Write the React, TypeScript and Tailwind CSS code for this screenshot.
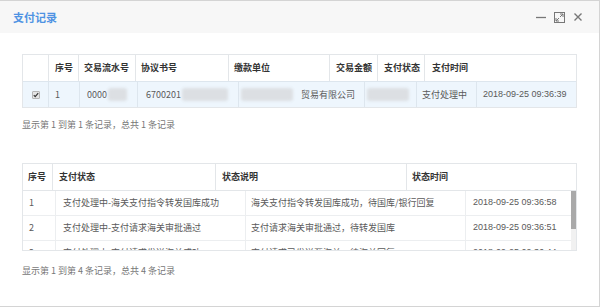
import { useState } from "react";

const font = "font-['Microsoft_YaHei','Noto_Sans_CJK_SC','Liberation_Sans',sans-serif]";

// blurred box standing in for masked values
const Mask = ({ w }: { w: string }) => <span className={`inline-block h-[13px] ${w} rounded-[3px] bg-[#dcdfe3] blur-[1.5px] align-middle`} />;

const payLogs = [
  { no: 1, status: "支付处理中-海关支付指令转发国库成功", desc: "海关支付指令转发国库成功，待国库/银行回复", time: "2018-09-25 09:36:58" },
  { no: 2, status: "支付处理中-支付请求海关审批通过", desc: "支付请求海关审批通过，待转发国库", time: "2018-09-25 09:36:51" },
  { no: 3, status: "支付处理中-支付请求发送海关成功", desc: "支付请求已发送至海关，待海关回复", time: "2018-09-25 09:36:44" },
];

const App = () => {
  const [checked, setChecked] = useState(true);

  return (
    <div className={`w-[600px] h-[307px] bg-white border-t border-r border-b border-[#d4d4d4] flex flex-col ${font}`}>
      {/* Title bar */}
      <div className="h-[32px] shrink-0 bg-[#f7f7f7] flex items-center pl-[13px] pr-[16px]">
        <span className="text-[11px] font-bold text-[#4f93e3]">支付记录</span>
        <div className="ml-auto flex items-center gap-[8px] text-[#777]">
          <svg width="10" height="10" viewBox="0 0 10 10"><path d="M0 5.5h10" stroke="currentColor" strokeWidth="1.3" /></svg>
          <svg width="11" height="11" viewBox="0 0 11 11" fill="none" stroke="currentColor" strokeWidth="1">
            <rect x="0.5" y="0.5" width="10" height="10" />
            <path d="M6 2h3v3M9 2L6 5M5 9H2V6M2 9l3-3" />
          </svg>
          <svg width="10" height="10" viewBox="0 0 10 10"><path d="M1.5 1.5l7 7M8.5 1.5l-7 7" stroke="currentColor" strokeWidth="1.4" /></svg>
        </div>
      </div>

      <div className="px-[22px] pt-[21px] text-[9px] text-[#5a5a5a]">
        {/* Payment table */}
        <div className="border border-[#e3e6e9]">
          <div className="grid grid-cols-[26px_30px_57px_93px_101px_48px_47px_1fr] h-[26px] bg-white text-[#333] font-semibold">
            <div className="border-r border-[#e3e6e9]" />
            <div className="border-r border-[#e3e6e9] flex items-center pl-[6px]">序号</div>
            <div className="border-r border-[#e3e6e9] flex items-center pl-[5px]">交易流水号</div>
            <div className="border-r border-[#e3e6e9] flex items-center pl-[5px]">协议书号</div>
            <div className="border-r border-[#e3e6e9] flex items-center pl-[5px]">缴款单位</div>
            <div className="border-r border-[#e3e6e9] flex items-center pl-[6px]">交易金额</div>
            <div className="border-r border-[#e3e6e9] flex items-center pl-[6px]">支付状态</div>
            <div className="flex items-center pl-[7px]">支付时间</div>
          </div>
          <div className="grid grid-cols-[26px_31px_58px_101px_126px_52px_60px_1fr] h-[26px] bg-[#eef6fd] border-t border-[#dde6ee]">
            <div className="border-r border-[#dde6ee] flex items-center justify-center">
              <button type="button" onClick={() => setChecked(!checked)} className="w-[8px] h-[8px] rounded-[1px] bg-[#e4e4e4] border border-[#b5b5b5] flex items-center justify-center">
                {checked && (
                  <svg width="6" height="6" viewBox="0 0 6 6"><path d="M0.8 3.2l1.4 1.4L5.2 1.2" fill="none" stroke="#333" strokeWidth="1.2" /></svg>
                )}
              </button>
            </div>
            <div className="border-r border-[#dde6ee] flex items-center pl-[6px]">1</div>
            <div className="border-r border-[#dde6ee] flex items-center pl-[7px] gap-[1px]">0000<Mask w="w-[19px]" /></div>
            <div className="border-r border-[#dde6ee] flex items-center pl-[8px] gap-[1px]">6700201<Mask w="w-[46px]" /></div>
            <div className="border-r border-[#dde6ee] flex items-center pl-[2px] gap-[8px]"><Mask w="w-[52px]" />贸易有限公司</div>
            <div className="border-r border-[#dde6ee] flex items-center pl-[2px]"><Mask w="w-[42px]" /></div>
            <div className="border-r border-[#dde6ee] flex items-center pl-[5px]">支付处理中</div>
            <div className="flex items-center pl-[6px] font-['Liberation_Sans',sans-serif]">2018-09-25 09:36:39</div>
          </div>
        </div>
        <div className="mt-[10px] text-[#777]">显示第 1 到第 1 条记录，总共 1 条记录</div>

        {/* Status log table */}
        <div className="mt-[31px] border border-[#e3e6e9]">
          <div className="grid grid-cols-[30px_163px_191px_1fr] h-[26px] text-[#333] font-semibold">
            <div className="border-r border-[#e3e6e9] flex items-center pl-[5px]">序号</div>
            <div className="border-r border-[#e3e6e9] flex items-center pl-[6px]">支付状态</div>
            <div className="border-r border-[#e3e6e9] flex items-center pl-[6px]">状态说明</div>
            <div className="flex items-center pl-[5px]">状态时间</div>
          </div>
          <div className="h-[60px] overflow-hidden border-t border-[#e3e6e9] flex">
            <div className="flex-1">
              {payLogs.map((log) => (
                <div key={log.no} className="grid grid-cols-[33px_190px_220px_1fr] h-[25px] border-b border-[#eceef0]">
                  <div className="border-r border-[#eceef0] flex items-center pl-[6px]">{log.no}</div>
                  <div className="border-r border-[#eceef0] flex items-center pl-[7px] whitespace-nowrap">{log.status}</div>
                  <div className="border-r border-[#eceef0] flex items-center pl-[5px] whitespace-nowrap">{log.desc}</div>
                  <div className="flex items-center pl-[7px] font-['Liberation_Sans',sans-serif]">{log.time}</div>
                </div>
              ))}
            </div>
            <div className="w-[5px] shrink-0 bg-[#f1f1f1] flex flex-col">
              <div className="h-[38px] bg-[#a9a9a9]" />
            </div>
          </div>
        </div>
        <div className="mt-[13px] text-[#777]">显示第 1 到第 4 条记录，总共 4 条记录</div>
      </div>
    </div>
  );
};

export default App;
